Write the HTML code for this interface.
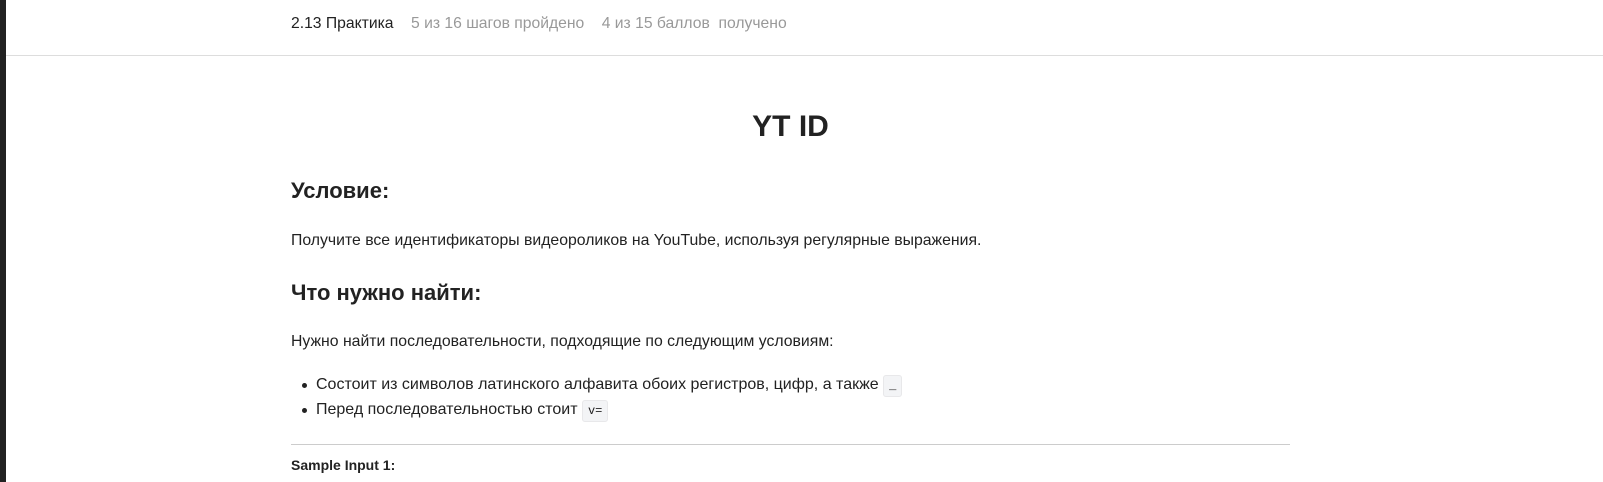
<!DOCTYPE html>
<html><head><meta charset="utf-8"><style>
*{margin:0;padding:0;box-sizing:border-box}
body{width:1603px;height:482px;overflow:hidden;background:#fff;font-family:"Liberation Sans",sans-serif;color:#222;position:relative}
.bar{position:absolute;left:0;top:0;width:6px;height:482px;background:#222}
.hdr{position:absolute;left:6px;top:0;right:0;height:56px;border-bottom:1px solid #ddd}
.hdr .t{position:absolute;left:285px;top:15px;font-size:15.7px;white-space:nowrap}
.hdr .g{color:#999}
h1{position:absolute;left:291px;width:999px;text-align:center;top:110px;font-size:30px;font-weight:bold;color:#222}
h2{font-size:22px;font-weight:bold;position:absolute;left:291px;color:#222}
p{font-size:15.8px;position:absolute;left:291px;white-space:nowrap}
ul{position:absolute;left:316px;list-style:none;font-size:16px}
li{position:relative;height:25px;line-height:25px;white-space:nowrap}
li:before{content:"";position:absolute;left:-14px;top:11px;width:5px;height:5px;border-radius:50%;background:#222}
code{font-family:"Liberation Mono",monospace;font-size:12px;background:#f3f4f6;border:1px solid #e8e8ea;border-radius:3px;padding:3px 5px}
hr{position:absolute;left:291px;width:999px;top:444px;border:0;border-top:1px solid #ccc}
</style></head><body>
<div class="bar"></div>
<div class="hdr"><div class="t">2.13 Практика &nbsp;&nbsp; <span class="g">5 из 16 шагов пройдено &nbsp;&nbsp; 4 из 15 баллов &nbsp;получено</span></div></div>
<h1>YT ID</h1>
<h2 style="top:178px">Условие:</h2>
<p style="top:232px">Получите все идентификаторы видеороликов на YouTube, используя регулярные выражения.</p>
<h2 style="top:280px">Что нужно найти:</h2>
<p style="top:333px">Нужно найти последовательности, подходящие по следующим условиям:</p>
<ul style="top:372px">
<li>Состоит из символов латинского алфавита обоих регистров, цифр, а также <code>_</code></li>
<li>Перед последовательностью стоит <code>v=</code></li>
</ul>
<hr>
<p style="top:457px;font-weight:bold;font-size:14px">Sample Input 1:</p>
</body></html>
